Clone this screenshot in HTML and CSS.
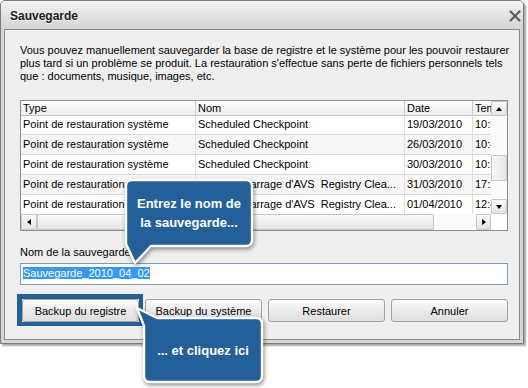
FILE: index.html
```html
<!DOCTYPE html>
<html lang="fr">
<head>
<meta charset="utf-8">
<title>Sauvegarde</title>
<link rel="stylesheet" href="styles.css">
</head>
<body>
<div class="window">
  <div class="titlebar">
    <span class="title">Sauvegarde</span>
    <svg class="close" width="12" height="12" viewBox="0 0 12 12"><path d="M1.5 1.5 L10.5 10.5 M10.5 1.5 L1.5 10.5" stroke="#5c5c5c" stroke-width="2.2" stroke-linecap="round" fill="none"/></svg>
  </div>
  <div class="client">
    <p class="intro">Vous pouvez manuellement sauvegarder la base de registre et le système pour les pouvoir restaurer<br>plus tard si un problème se produit. La restauration s'effectue sans perte de fichiers personnels tels<br>que : documents, musique, images, etc.</p>

    <div class="list">
      <div class="view">
        <div class="head">
          <div class="c c1">Type</div>
          <div class="c c2">Nom</div>
          <div class="c c3">Date</div>
          <div class="c c4">Temps</div>
        </div>
        <div class="rows">
          <div class="row"><div class="c c1">Point de restauration système</div><div class="c c2">Scheduled Checkpoint</div><div class="c c3">19/03/2010</div><div class="c c4">10:52</div></div>
          <div class="row alt"><div class="c c1">Point de restauration système</div><div class="c c2">Scheduled Checkpoint</div><div class="c c3">26/03/2010</div><div class="c c4">10:47</div></div>
          <div class="row"><div class="c c1">Point de restauration système</div><div class="c c2">Scheduled Checkpoint</div><div class="c c3">30/03/2010</div><div class="c c4">10:33</div></div>
          <div class="row alt"><div class="c c1">Point de restauration système</div><div class="c c2">Avant démarrage d'AVS&nbsp; Registry Clea...</div><div class="c c3">31/03/2010</div><div class="c c4">17:21</div></div>
          <div class="row"><div class="c c1">Point de restauration système</div><div class="c c2">Avant démarrage d'AVS&nbsp; Registry Clea...</div><div class="c c3">01/04/2010</div><div class="c c4">12:40</div></div>
        </div>
      </div>
      <div class="vs">
        <div class="sb-btn"><span class="tri up"></span></div>
        <div class="track t1"></div>
        <div class="thumb vthumb"></div>
        <div class="track t2"></div>
        <div class="sb-btn"><span class="tri down"></span></div>
      </div>
      <div class="hs">
        <div class="sb-btn hbtn"><span class="tri left"></span></div>
        <div class="thumb hthumb"></div>
        <div class="track ht"></div>
        <div class="sb-btn hbtn"><span class="tri right"></span></div>
      </div>
      <div class="corner"></div>
    </div>

    <div class="field-label">Nom de la sauvegarde</div>
    <div class="input"><span class="sel">Sauvegarde_2010_04_02</span></div>

    <div class="buttons">
      <button class="btn focused">Backup du registre</button>
      <button class="btn">Backup du système</button>
      <button class="btn">Restaurer</button>
      <button class="btn">Annuler</button>
    </div>
  </div>
</div>

<div class="bubble b1">
  <svg width="140" height="96" viewBox="0 0 140 96"><path d="M12 6 H126 Q132 6 132 12 V66 Q132 72 126 72 H31 L15 89 L6 70 V12 Q6 6 12 6 Z" fill="#23609a" stroke="#fff" stroke-width="2.4" stroke-linejoin="round"/></svg>
  <div class="bubble-text t-b1">Entrez le nom de<br>la sauvegarde...</div>
</div>

<div class="bubble b2">
  <svg width="140" height="86" viewBox="0 0 140 86"><path d="M27 16 H126 Q132 16 132 22 V74 Q132 80 126 80 H20 Q14 80 14 74 V24 L7 6 Z" fill="#23609a" stroke="#fff" stroke-width="2.4" stroke-linejoin="round"/></svg>
  <div class="bubble-text t-b2">... et cliquez ici</div>
</div>
</body>
</html>
```

FILE: styles.css
```css
* { box-sizing: border-box; }

html, body {
  margin: 0;
  background: #fff;
}

body {
  position: relative;
  width: 528px;
  height: 388px;
  overflow: hidden;
  font-family: "Liberation Sans", Arial, sans-serif;
  font-size: 11px;
  color: #000;
}

.window {
  width: 524px;
  height: 344px;
  border: 1px solid #7a7a7a;
  border-radius: 5px 5px 0 0;
  background: #d6d6d6;
  box-shadow: 2px 2px 2px rgba(0, 0, 0, 0.35);
  display: flex;
  flex-direction: column;
}

.titlebar {
  height: 28px;
  flex: none;
  display: flex;
  align-items: center;
  justify-content: space-between;
  padding: 1px 2px 0 9px;
  background: linear-gradient(#f4f4f4, #e2e2e2 50%, #d4d4d4);
  border-radius: 4px 4px 0 0;
}

.title {
  font-weight: bold;
  font-size: 12px;
  color: #1c1c1c;
  text-shadow: 0 1px 0 rgba(255, 255, 255, 0.7);
}

.close { display: block; }

.client {
  flex: 1;
  margin: 0 3px 3px 3px;
  border: 1px solid #8a8a8a;
  background: #efefef;
  padding: 14px 11px 0 15px;
  display: flex;
  flex-direction: column;
}

.intro {
  margin: 0;
  line-height: 13px;
  white-space: nowrap;
}

.list {
  margin-top: 17px;
  height: 131px;
  flex: none;
  border: 1px solid #8d8d8d;
  background: #fff;
  display: grid;
  grid-template-columns: 470px 16px;
  grid-template-rows: 113px 16px;
}

.view {
  overflow: hidden;
}

.head {
  display: flex;
  height: 15px;
  background: linear-gradient(#fdfdfd, #ededed);
  border-bottom: 1px solid #c4c4c4;
}

.head .c {
  line-height: 14px;
  border-right: 1px solid #cacaca;
}

.rows { margin-top: -1px; }

.row {
  display: flex;
  height: 20px;
  line-height: 19px;
  border-bottom: 1px solid #dadada;
}

.row.alt { background: #f6f6f6; }

.c {
  flex: none;
  padding-left: 2px;
  white-space: nowrap;
  overflow: hidden;
  border-right: 1px solid #e0e0e0;
}

.c1 { width: 175px; }
.c2 { width: 209px; }
.c3 { width: 68px; }
.c4 { width: 18px; border-right: 0; }

.head .c4 { border-right: 0; }

.vs {
  display: flex;
  flex-direction: column;
  background: #fff;
}

.sb-btn {
  flex: none;
  width: 16px;
  height: 15px;
  border: 1px solid #c6c6c6;
  border-radius: 1px;
  background: linear-gradient(#fafafa, #e4e4e4);
  display: flex;
  align-items: center;
  justify-content: center;
}

.track { background: #fbfbfb; }
.t1 { height: 39px; }
.t2 { height: 18px; }

.thumb {
  border: 1px solid #c6c6c6;
  border-radius: 1px;
}

.vthumb {
  height: 26px;
  background: linear-gradient(90deg, #f8f8f8, #e6e6e6);
}

.hs {
  display: flex;
  background: #fff;
}

.hbtn { height: 16px; }
.hbtn:first-child { width: 16px; }
.hbtn:last-child { width: 15px; }

.hthumb {
  width: 397px;
  background: linear-gradient(#f8f8f8, #e6e6e6);
}

.ht { width: 42px; }

.corner { background: #fff; }

.tri {
  width: 0;
  height: 0;
  border-style: solid;
  border-color: transparent;
}

.tri.up { border-width: 0 3.5px 4px 3.5px; border-bottom-color: #000; }
.tri.down { border-width: 4px 3.5px 0 3.5px; border-top-color: #000; }
.tri.left { border-width: 3.5px 4px 3.5px 0; border-right-color: #000; }
.tri.right { border-width: 3.5px 0 3.5px 4px; border-left-color: #000; }

.field-label {
  margin-top: 15px;
  line-height: 13px;
}

.input {
  margin-top: 4px;
  height: 22px;
  border: 1px solid #7f9db9;
  background: #fff;
  padding: 3px 0 0 2px;
  line-height: 13px;
}

.sel {
  background: #3399ff;
  color: #fff;
}

.buttons {
  margin-top: 14px;
  display: flex;
  gap: 6px;
  padding-left: 2px;
}

.btn {
  flex: 1;
  height: 23px;
  margin: 0;
  padding: 0;
  border: 1px solid #a2a2a2;
  border-radius: 3px;
  background: linear-gradient(#fbfbfb, #eaeaea 55%, #dedede);
  font-family: "Liberation Sans", Arial, sans-serif;
  font-size: 11px;
  color: #000;
}

.btn.focused { position: relative; }

.btn.focused::after {
  content: "";
  position: absolute;
  top: -6px;
  left: -6px;
  right: -5px;
  bottom: -5px;
  border-style: solid;
  border-color: #23609a;
  border-width: 5px 4px 4px 5px;
}

.bubble {
  position: absolute;
}

.bubble svg {
  position: absolute;
  left: 0;
  top: 0;
  overflow: visible;
  filter: drop-shadow(1px 2px 2px rgba(0, 0, 0, 0.45));
}

.bubble-text {
  position: absolute;
  display: flex;
  align-items: center;
  justify-content: center;
  text-align: center;
  color: #fff;
  font-weight: bold;
  font-size: 13px;
  line-height: 19px;
}

.b1 { left: 120px; top: 174px; width: 140px; height: 96px; }
.t-b1 { left: 6px; top: 6px; width: 126px; height: 66px; }

.b2 { left: 130px; top: 302px; width: 140px; height: 86px; }
.t-b2 { left: 14px; top: 16px; width: 118px; height: 64px; }
```
